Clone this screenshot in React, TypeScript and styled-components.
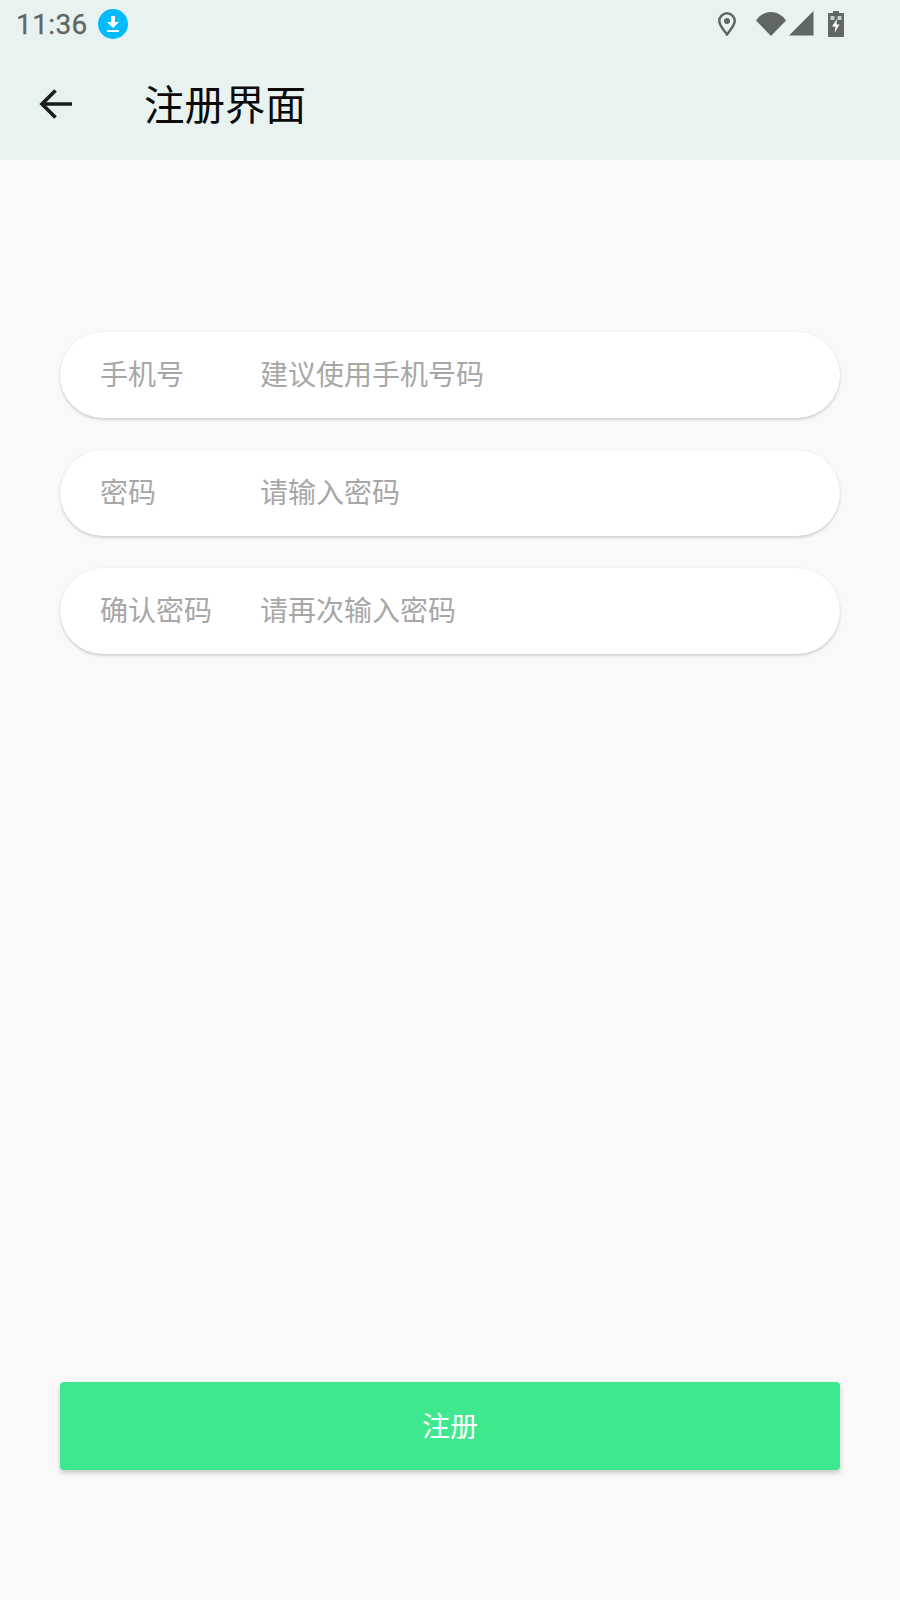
import React from "react";
import styled, { createGlobalStyle } from "styled-components";

const Global = createGlobalStyle`
  html, body { margin: 0; padding: 0; background: #f9f9f9; }
  * { box-sizing: border-box; }
`;

const Page = styled.div`
  width: 900px;
  height: 1600px;
  display: flex;
  flex-direction: column;
  background: #f9f9f9;
  font-family: "Noto Sans CJK SC", "Noto Sans", sans-serif;
  overflow: hidden;
`;

const Top = styled.header`
  height: 160px;
  background: #e8f2f0;
  display: flex;
  flex-direction: column;
`;

const StatusBar = styled.div`
  height: 50px;
  display: flex;
  align-items: center;
  padding: 0 56px 0 16px;
`;

const Time = styled.span`
  font-family: Roboto, sans-serif;
  font-size: 28px;
  font-weight: 400;
  letter-spacing: 0.4px;
  -webkit-text-stroke: 0.3px #5f6664;
  color: #5f6664;
  line-height: 50px;
`;

const Badge = styled.svg`
  width: 30px;
  height: 30px;
  margin: 0 0 2px 10px;
  flex: none;
`;

const StatusIcons = styled.div`
  margin-left: auto;
  display: flex;
  align-items: center;
  height: 50px;
  padding-bottom: 3px;
`;

const StatusGlyph = styled.svg<{ $gap: number }>`
  display: block;
  flex: none;
  margin-left: ${(p) => p.$gap}px;
`;

const NavBar = styled.div`
  flex: 1;
  display: flex;
  align-items: center;
  padding: 0 0 4px 36px;
`;

const BackIcon = styled.svg`
  width: 40px;
  height: 40px;
  flex: none;
  margin-top: 2px;
`;

const Title = styled.h1`
  margin: 0 0 0 68px;
  font-size: 40.5px;
  font-weight: 400;
  line-height: 56px;
  color: #0a0a0a;
`;

const Form = styled.main`
  flex: 1;
  display: flex;
  flex-direction: column;
  gap: 32px;
  padding: 172px 60px 0;
`;

const Field = styled.div`
  height: 86px;
  border-radius: 43px;
  background: #fff;
  display: flex;
  align-items: center;
  padding: 0 0 4px 40px;
  box-shadow: 0 2px 3px rgba(0, 0, 0, 0.15), 0 0 2px rgba(0, 0, 0, 0.08);
`;

const Label = styled.span`
  width: 160px;
  flex: none;
  font-size: 28px;
  color: #a7a7a7;
`;

const Hint = styled.span`
  font-size: 28px;
  color: #a7a7a7;
`;

const Footer = styled.div`
  padding: 0 60px 130px;
`;

const Submit = styled.button`
  display: block;
  width: 100%;
  height: 88px;
  border: 0;
  border-radius: 4px;
  padding: 0 0 3px;
  background: #3ee88f;
  color: #fff;
  font-family: inherit;
  font-size: 28px;
  box-shadow: 0 3px 5px rgba(0, 0, 0, 0.2);
`;

const fields = [
  { label: "手机号", hint: "建议使用手机号码" },
  { label: "密码", hint: "请输入密码" },
  { label: "确认密码", hint: "请再次输入密码" },
];

export default function App() {
  return (
    <Page>
      <Global />
      <Top>
        <StatusBar>
          <Time>11:36</Time>
          <Badge viewBox="0 0 30 30">
            <circle cx="15" cy="15" r="15" fill="#00bcff" />
            <path d="M13 7h4v6h4l-6 6-6-6h4z" fill="#fff" />
            <rect x="9" y="21" width="12" height="2" fill="#fff" />
          </Badge>
          <StatusIcons>
            <StatusGlyph $gap={0} width="18" height="24" viewBox="0 0 18 24">
              <path d="M9 1.300A7.700 7.700 0 0 0 1.300 9c0 4.600 4.700 9.300 7.700 13.400 3-4.100 7.700-8.800 7.700-13.400A7.700 7.700 0 0 0 9 1.300z" fill="none" stroke="#5f6664" strokeWidth="2.500" />
              <circle cx="9" cy="9" r="3" fill="#5f6664" />
            </StatusGlyph>
            <StatusGlyph $gap={20} width="30" height="25" viewBox="0 0 30 25">
              <path d="M0 9.500C4 4 9 1 15 1s11 3 15 8.500L15 25z" fill="#5f6664" />
            </StatusGlyph>
            <StatusGlyph $gap={3} width="25" height="25" viewBox="0 0 25 25">
              <path d="M0 24.500 24.500 0v24.500z" fill="#5f6664" />
            </StatusGlyph>
            <StatusGlyph $gap={14} width="16" height="26" viewBox="0 0 16 26">
              <path d="M5 0h6v2h4a1 1 0 0 1 1 1v22a1 1 0 0 1-1 1H1a1 1 0 0 1-1-1V3a1 1 0 0 1 1-1h4z" fill="#5f6664" />
              <path d="M9 8 4 15.500h3.500L6.500 22l5-8.500H8.500z" fill="#fff" />
              <path d="M2.500 5h4v4h-4zM9.500 5h4v4h-4z" fill="#e8f2f0" opacity=".75" />
            </StatusGlyph>
          </StatusIcons>
        </StatusBar>
        <NavBar>
          <BackIcon viewBox="0 0 40 40">
            <path d="M36 20H7M19.500 6.500 6 20l13.500 13.500" fill="none" stroke="#1d1d1d" strokeWidth="3.700" />
          </BackIcon>
          <Title>注册界面</Title>
        </NavBar>
      </Top>
      <Form>
        {fields.map((f) => (
          <Field key={f.label}>
            <Label>{f.label}</Label>
            <Hint>{f.hint}</Hint>
          </Field>
        ))}
      </Form>
      <Footer>
        <Submit type="button">注册</Submit>
      </Footer>
    </Page>
  );
}
